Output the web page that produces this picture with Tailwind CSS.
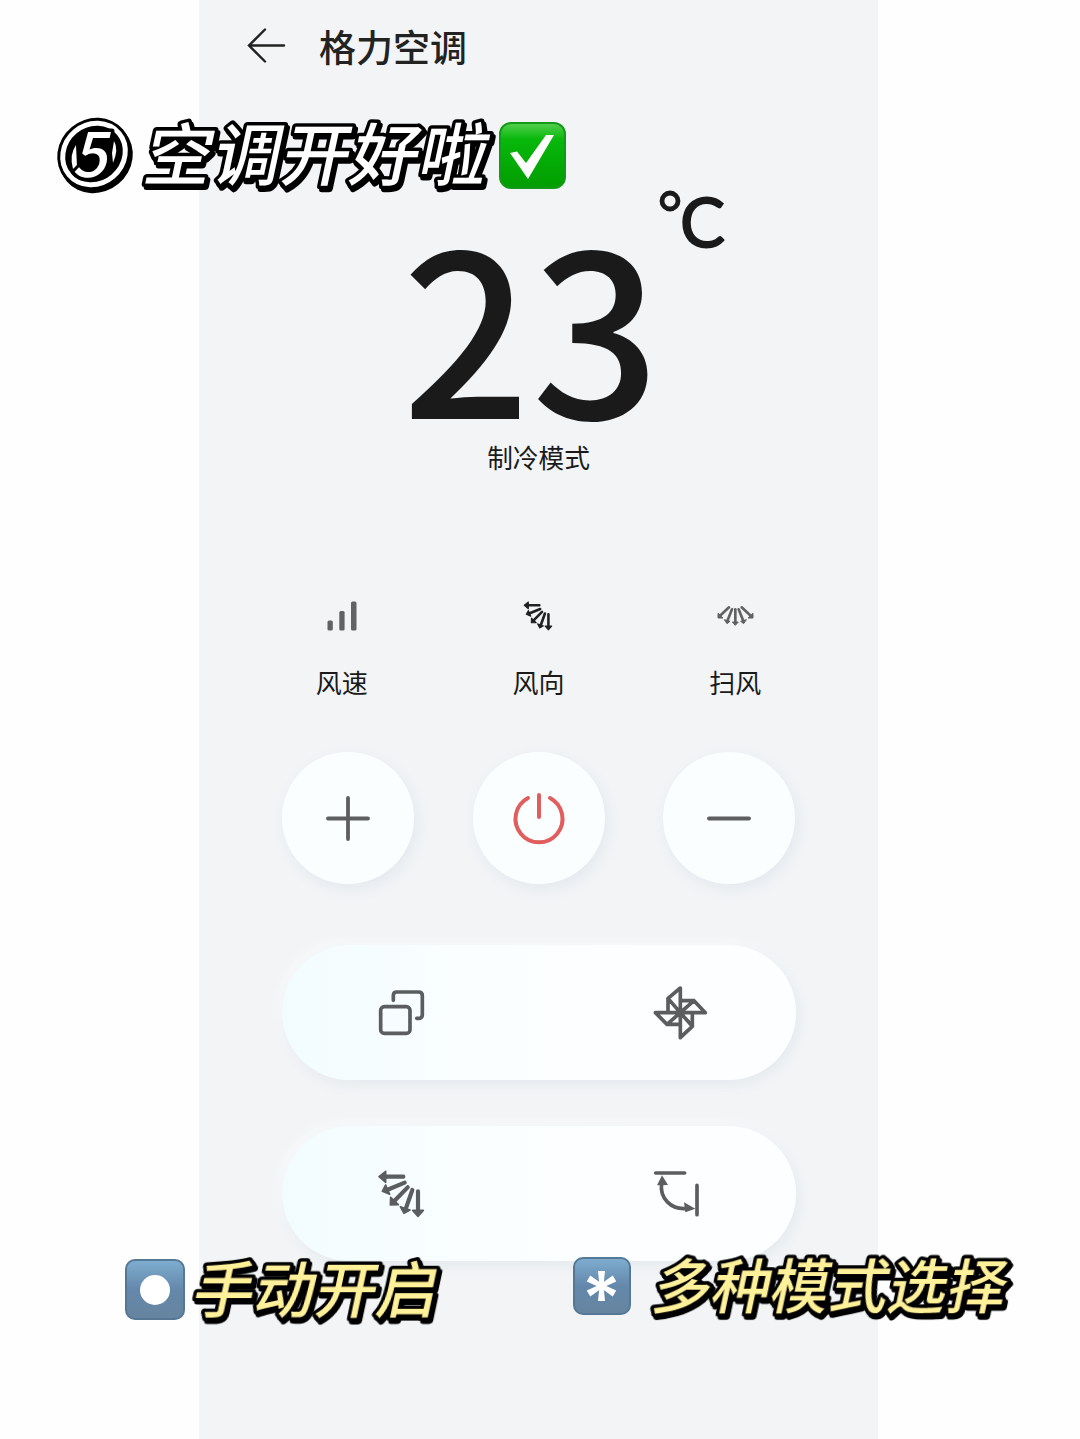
<!DOCTYPE html>
<html lang="zh" class="bg-white">
<head>
  <meta charset="UTF-8">
  <title>格力空调</title>
  <script src="https://cdn.jsdelivr.net/npm/@tailwindcss/browser@4"></script>
</head>
<body class="bg-[#fefefe] font-['Noto_Sans_CJK_SC',sans-serif]">
<!-- shared icon -->
<svg class="hidden">
  <symbol id="fan-dir" viewBox="52 57 150 150">
    <g fill="none" stroke="currentColor" stroke-width="12.500" stroke-linecap="round">
      <path d="M131 80H72M135 98L82 120M144 112L101 156M158 120L138 177M175 124V187"/>
    </g>
    <g fill="currentColor" stroke="currentColor" stroke-width="5" stroke-linejoin="round">
      <path d="M58 80L78 64V97ZM68 124L78 105L90 133ZM92 165L93 142L116 164ZM133 190L122 170L151 180ZM175 199L159 181H191Z"/>
    </g>
  </symbol>
</svg>

<div class="relative w-[1080px] h-[1439px] overflow-hidden">
  <main class="ml-[199px] w-[679px] h-full bg-[#f2f4f6] flex flex-col items-center text-[#1a1a1a]">
    <header class="w-full h-24 pl-12 pb-1 flex items-center gap-[33px]">
      <svg class="w-[39px] h-[38px]" viewBox="0 0 39 38" fill="none" stroke="#222" stroke-width="2.4" stroke-linecap="round"><path d="M2 18.500H37M18 2.500L2 18.500L18 34.500"/></svg>
      <h1 class="text-[37px] leading-none font-medium text-[#222]">格力空调</h1>
    </header>

    <section class="w-full h-[388px] flex flex-col items-center">
      <svg class="w-full h-[343px] overflow-visible" viewBox="199 96 679 343" fill="#1a1a1a" stroke="#1a1a1a">
        <text x="402" y="419" font-family="'Noto Sans CJK SC', sans-serif" font-size="225" font-weight="500" stroke="none" textLength="258">23</text>
        <circle cx="670" cy="201" r="8" fill="none" stroke-width="4.800"/>
        <text x="680" y="247" font-family="Lato, sans-serif" font-size="68" stroke-width="1.800" textLength="45" lengthAdjust="spacingAndGlyphs">C</text>
      </svg>
      <p class="text-[25.7px] leading-9">制冷模式</p>
    </section>

    <section class="w-[590px] h-[268px] pt-[112px] grid grid-cols-3 text-center text-[26px] leading-9">
      <div class="flex flex-col items-center gap-7">
        <svg class="w-10 h-10" viewBox="322 596 40 40" fill="#606263"><rect x="327.500" y="620.500" width="5.300" height="10" rx="1.500"/><rect x="339.300" y="611" width="5.300" height="19.500" rx="1.500"/><rect x="351" y="601.500" width="5.500" height="29" rx="1.500"/></svg>
        <span>风速</span>
      </div>
      <div class="flex flex-col items-center gap-7">
        <svg class="w-[31px] h-10 text-[#202122]"><use href="#fan-dir"/></svg>
        <span>风向</span>
      </div>
      <div class="flex flex-col items-center gap-7">
        <svg class="w-10 h-10" viewBox="1245 48 120 120" stroke="#606263" fill="#606263">
          <path fill="none" stroke-width="8" stroke-linecap="round" d="M1287 82L1260 107M1296 88L1282 123M1306 88V128M1316 88L1330 123M1325 82L1352 107"/>
          <path stroke-width="3" stroke-linejoin="round" d="M1254 114V100L1269 114ZM1281 131L1273 119L1290 124ZM1306 136L1297 126H1315ZM1331 131L1339 119L1322 124ZM1359 114V100L1344 114Z"/>
        </svg>
        <span>扫风</span>
      </div>
    </section>

    <section class="w-[513px] h-[132px] flex justify-between">
      <button class="size-[132px] rounded-full bg-[#fbfeff] shadow-[3px_5px_14px_#e4e9ee] grid place-items-center">
        <svg class="size-[52px]" viewBox="0 0 52 52" stroke="#5c5e5f" stroke-width="3.800" stroke-linecap="round"><path d="M6 26.500H46M26 6V47"/></svg>
      </button>
      <button class="size-[132px] rounded-full bg-[#fbfeff] shadow-[3px_5px_14px_#e4e9ee] grid place-items-center">
        <svg class="size-[60px]" viewBox="0 0 60 60" fill="none" stroke="#e05e5e" stroke-width="4" stroke-linecap="round"><path d="M30 7V29M19 10A23.500 23.500 0 1 0 41 10"/></svg>
      </button>
      <button class="size-[132px] rounded-full bg-[#fbfeff] shadow-[3px_5px_14px_#e4e9ee] grid place-items-center">
        <svg class="size-[52px]" viewBox="0 0 52 52" stroke="#5c5e5f" stroke-width="3.800" stroke-linecap="round"><path d="M6 26.500H46"/></svg>
      </button>
    </section>

    <section class="mt-[61px] w-[514px] flex flex-col gap-[46px] text-[#5b5d5e]">
      <div class="h-[135px] pt-1 rounded-full bg-linear-to-r from-[#f2fcfe] via-[#fbfeff] via-40% to-[#fdfeff] shadow-[3px_5px_12px_#e5eaee,-4px_-4px_10px_#f8fafb] flex items-center justify-between pl-[78px] pr-[66px]">
        <svg class="size-[90px]" viewBox="0 0 270 270" fill="none" stroke="currentColor" stroke-width="11" stroke-linecap="round"><rect x="62" y="110" width="88" height="80" rx="11"/><path d="M100 91V76Q100 66 110 66H176Q187 66 187 77V134Q187 145 176 145H170"/></svg>
        <svg class="size-[90px]" viewBox="0 0 270 270" fill="none" stroke="currentColor" stroke-width="11" stroke-linecap="round" stroke-linejoin="round"><path d="M121 128V54L84 85V128M84 85L121 128H196L162 92H121M162 92L121 128V203L157 169V128M157 169L121 128H46L81 163H121M81 163L121 128"/></svg>
      </div>
      <div class="h-[135px] rounded-full bg-linear-to-r from-[#f2fcfe] via-[#fbfeff] via-40% to-[#fdfeff] shadow-[3px_5px_12px_#e5eaee,-4px_-4px_10px_#f8fafb] flex items-center justify-between pl-[95px] pr-[66px]">
        <svg class="size-[50px]"><use href="#fan-dir"/></svg>
        <svg class="size-[90px]" viewBox="0 -3 270 270" fill="none" stroke="currentColor" stroke-width="11" stroke-linecap="round"><path d="M47 69H134M171 106V194M65 98C58 145 93 181 143 175"/><path d="M66 76L51 106L84 105ZM166 176L132 157L136 187Z" fill="currentColor" stroke="none"/></svg>
      </div>
    </section>
  </main>

  <!-- caption stickers over the phone -->
  <svg class="absolute inset-0" width="1080" height="1439" viewBox="0 0 1080 1439" font-family="'Noto Sans CJK SC', sans-serif">
    <defs>
      <linearGradient id="key" x2="0" y2="1"><stop stop-color="#7faed0"/><stop offset=".5" stop-color="#6488ab"/><stop offset="1" stop-color="#66849f"/></linearGradient>
      <linearGradient id="green" x2="0" y2="1"><stop stop-color="#55d04f"/><stop offset=".25" stop-color="#08b80b"/><stop offset="1" stop-color="#009d00"/></linearGradient>
    </defs>

    <g class="[filter:drop-shadow(2.5px_3.5px_0_#000)]" stroke="#000" stroke-linejoin="round" paint-order="stroke">
      <ellipse cx="94" cy="154" rx="38" ry="35" fill="#000" stroke="none" transform="rotate(-40 94 154)"/>
      <ellipse cx="94" cy="154" rx="32.500" ry="29.500" fill="none" stroke="#fff" stroke-width="5" transform="rotate(-40 94 154)"/>
      <path d="M76 145Q69 155 73 169L77 167ZM114 141Q119 149 113 163L112 153Z" fill="#fff" stroke="none"/>
      <text transform="translate(72 177) skewX(-12)" font-size="61" font-weight="500" fill="#fff" stroke-width="7">5</text>
      <text transform="translate(141 179.500) skewX(-12)" font-size="68" font-weight="500" fill="#fff" stroke-width="7" textLength="343">空调开好啦</text>
      <text transform="translate(190 1312.500) skewX(-12)" font-size="61" font-weight="500" fill="#fff09a" stroke-width="7" textLength="245">手动开启</text>
      <text transform="translate(650 1308) skewX(-12)" font-size="58.500" font-weight="500" fill="#fff09a" stroke-width="7" textLength="353">多种模式选择</text>
    </g>

    <rect x="500" y="123" width="65" height="65" rx="11" fill="url(#green)" stroke="#149a1b" stroke-width="2"/>
    <path d="M510 153L517 151.500L526 163L546 135H554L528 179Z" fill="#fff"/>

    <rect x="126" y="1260" width="58" height="59" rx="9" fill="url(#key)" stroke="#557896" stroke-width="2"/>
    <circle cx="155" cy="1290" r="15" fill="#fff"/>
    <rect x="574" y="1258" width="56" height="56" rx="9" fill="url(#key)" stroke="#557896" stroke-width="2"/>
    <g fill="#fff" transform="translate(601.500 1286)">
      <path id="arms" d="M-3.500 -15H3.500L2 0L3.500 15H-3.500L-2 0Z"/>
      <use href="#arms" transform="rotate(60)"/>
      <use href="#arms" transform="rotate(-60)"/>
    </g>
  </svg>
</div>
</body>
</html>
